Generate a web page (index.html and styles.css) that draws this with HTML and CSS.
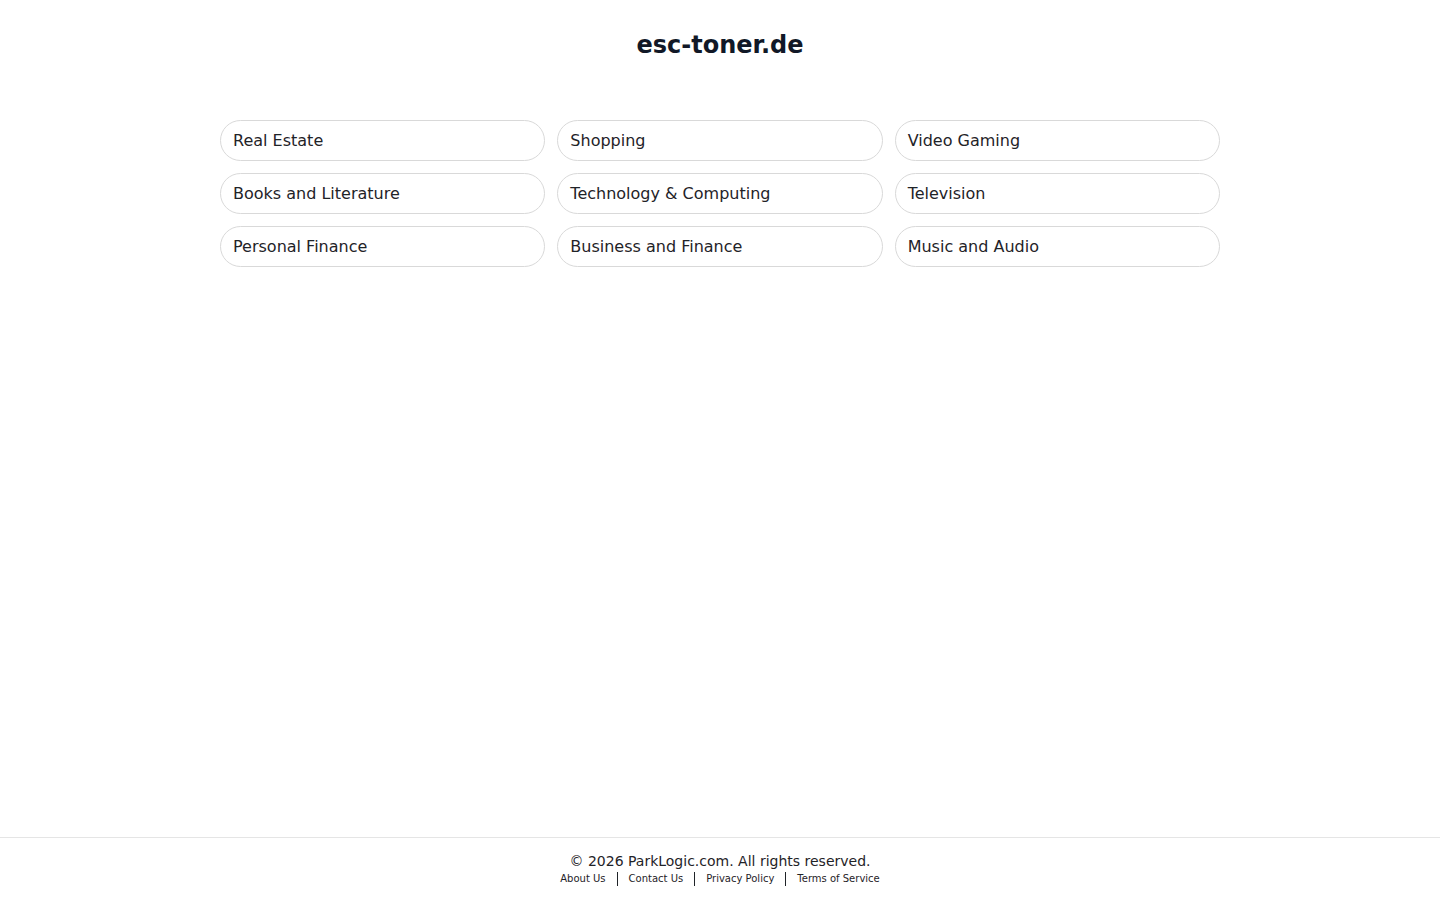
FILE: index.html
```html
<!DOCTYPE html>
<html lang="en">
<head>
    <meta charset="UTF-8">
    <meta name="viewport" content="width=device-width, initial-scale=1.0">
    <title>esc-toner.de</title>
    <link rel="stylesheet" href="styles.css">
</head>
<body>
    <div class="page">
        <header class="header">
            <h1 class="domain">esc-toner.de</h1>
        </header>

        <main class="content">
            <div class="topics">
                <a class="topic" href="#">Real Estate</a>
                <a class="topic" href="#">Shopping</a>
                <a class="topic" href="#">Video Gaming</a>
                <a class="topic" href="#">Books and Literature</a>
                <a class="topic" href="#">Technology &amp; Computing</a>
                <a class="topic" href="#">Television</a>
                <a class="topic" href="#">Personal Finance</a>
                <a class="topic" href="#">Business and Finance</a>
                <a class="topic" href="#">Music and Audio</a>
            </div>
        </main>

        <footer class="footer">
            <p class="copyright">&copy; 2026 ParkLogic.com. All rights reserved.</p>
            <div class="footer-links">
                <a href="#">About Us</a>
                <a href="#">Contact Us</a>
                <a href="#">Privacy Policy</a>
                <a href="#">Terms of Service</a>
            </div>
        </footer>
    </div>
</body>
</html>
```

FILE: styles.css
```css
body {
    margin: 0;
    font-family: 'DejaVu Sans', 'Liberation Sans', sans-serif;
    color: #111827;
    background: #fff;
}

.page {
    min-height: 100vh;
    display: flex;
    flex-direction: column;
}

.header {
    padding-top: 29px;
    text-align: center;
}

.domain {
    margin: 0;
    font-size: 24px;
    line-height: 32px;
    font-weight: bold;
}

.content {
    flex: 1;
    padding-top: 59px;
}

.topics {
    width: 1000px;
    margin: 0 auto;
    display: grid;
    grid-template-columns: repeat(3, 1fr);
    gap: 12px;
}

.topic {
    display: block;
    padding: 10px 12px;
    font-size: 16px;
    line-height: 19px;
    color: #1f2328;
    text-decoration: none;
    border: 1px solid #d9d9d9;
    border-radius: 21px;
}

.topic:hover {
    background: #f5f5f5;
}

/* footer */
.footer {
    border-top: 1px solid #e5e5e5;
    padding: 15px 0 14px;
    text-align: center;
}

.copyright {
    margin: 0;
    font-size: 14px;
    line-height: 17px;
    color: #1f2328;
}

.footer-links {
    display: flex;
    justify-content: center;
    margin-top: 2px;
}

.footer-links a {
    font-size: 10px;
    line-height: 14px;
    color: #1f2328;
    text-decoration: none;
    padding: 0 11px;
    border-left: 1px solid #1f2328;
}

.footer-links a:first-child {
    border-left: none;
}
```
